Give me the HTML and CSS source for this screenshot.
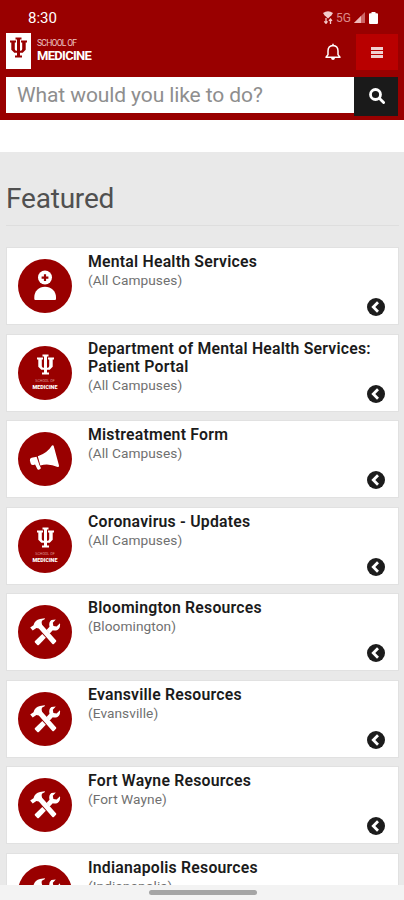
FILE: index.html
```html
<!DOCTYPE html>
<html lang="en">

<head>
    <meta charset="UTF-8">
    <meta name="viewport" content="width=device-width, initial-scale=1.0">
    <title>School of Medicine</title>
    <link rel="stylesheet" href="styles.css">
</head>

<body>
    <svg class="sprite">
        <symbol id="trident" viewBox="0 0 17 20">
            <path d="M5.500 0h6v2H10v11.200h.6q1.600 0 1.600-1.700V5H11V3h6v2h-1.300v7.200l-3 3.100H10V18h2v2H5v-2h2v-2.700H4.300l-3-3.100V5H0V3h6v2H4.800v6.500q0 1.700 1.600 1.700H7V2H5.500z"/>
        </symbol>
        <symbol id="person" viewBox="0 0 54 54">
            <circle cx="27" cy="18.500" r="7"/>
            <path d="M16.300 40v-2c0-6 4.500-10.300 10.700-10.300S38 32 38 38v2q0 1-1 1H17.300q-1 0-1-1z"/>
            <path class="cut" d="M25.900 15.300h2.200v2.300h2.300v2.200h-2.300v2.300h-2.200v-2.300h-2.300v-2.200h2.300z"/>
        </symbol>
        <symbol id="megaphone" viewBox="0 0 54 54">
            <path d="M19.800 24.300Q29 21.500 34 13.600q1.200-1 1.700.5L41 33.500q.2 1.700-1.300 1.500Q31 31 22.300 33.400z"/>
            <path d="M18.600 24.700l-5 1.100q-2.200.7-1.700 2.700l.8 2.900q.7 1.800 2.700 1.500l1.700-.3 2.200 4.500q.5.900 1.500.6l1.500-.6q.8-.6.400-1.500l-1.300-2.500z"/>
        </symbol>
        <symbol id="tools" viewBox="0 0 54 54">
            <path d="M12.200 22.500l3.300-2.300Q17 14.700 22 13.900l4.600-.7q.8.500 0 1l-2.700 1.600q-.6 2 .2 3.900L38 35.200q.7.800 0 1.500l-2.100 2.200q-.8.700-1.500 0L20.800 23.500l-2.400-.4-3.700 2.500z"/>
            <path d="M17 36l7.300-7 3.500 3.700-7 7.200q-.8.600-1.500 0L17 37.500q-.7-.8 0-1.500z"/>
            <path d="M28.500 25l3-3.200q-1.100-4.400 1.900-6.700l4.400-.7-3 3.300.6 3.200 3.200.6 3.400-3.200q.8 4.800-2.500 6.600-2.400 1.200-4.700.4l-3.100 3.100z"/>
        </symbol>
        <symbol id="chevron" viewBox="0 0 18 18">
            <circle cx="9" cy="9" r="9"/>
            <path d="M11 4.300L6.300 9l4.700 4.700"/>
        </symbol>
    </svg>

    <header class="header">
        <div class="status-bar">
            <span class="time">8:30</span>
            <svg class="wifi" viewBox="0 0 10 13">
                <path d="M0 2Q5-1.500 10 2L8.500 4.200 5 7.500 1.500 4.200z"/>
                <path d="M3 7v5M1.300 10.300L3 12.300l1.500-2M7.500 13V8M6 9.800L7.500 8 9 9.800"/>
            </svg>
            <span class="network">5G</span>
            <svg class="signal" viewBox="0 0 11 11">
                <path class="dim" d="M11 0v11H0z"/>
                <path d="M7 4v7H0z"/>
            </svg>
            <svg class="battery" viewBox="0 0 9 12">
                <path d="M2.500 0h4v1.300H8q1 0 1 1V11q0 1-1 1H1q-1 0-1-1V2.300q0-1 1-1h1.500z"/>
            </svg>
        </div>
        <div class="brand-bar">
            <div class="logo"><svg><use href="#trident"/></svg></div>
            <div class="brand">
                <span>SCHOOL OF</span>
                <strong>MEDICINE</strong>
            </div>
            <svg class="bell" viewBox="0 0 16 18">
                <path d="M8 .8v1.500M1 14.200h14l-2-2.600V8q0-5.300-5-5.600Q3 2.700 3 8v3.600z"/>
                <path class="fill" d="M6 15h4q-.3 2-2 2t-2-2z"/>
            </svg>
            <div class="menu"><i></i><i></i><i></i></div>
        </div>
        <div class="search">
            <div class="search-input">What would you like to do?</div>
            <div class="search-button">
                <svg viewBox="0 0 16 16"><circle cx="6.500" cy="6.500" r="5"/><path d="M10.300 10.300l4.300 4.300"/></svg>
            </div>
        </div>
    </header>

    <main class="content">
        <h1>Featured</h1>
        <div class="card">
            <svg class="icon"><use href="#person"/></svg>
            <div class="text"><h2>Mental Health Services</h2><p>(All Campuses)</p></div>
            <svg class="arrow"><use href="#chevron"/></svg>
        </div>
        <div class="card">
            <div class="icon school"><svg><use href="#trident"/></svg><span>SCHOOL OF</span><strong>MEDICINE</strong></div>
            <div class="text"><h2>Department of Mental Health Services:<br>Patient Portal</h2><p>(All Campuses)</p></div>
            <svg class="arrow"><use href="#chevron"/></svg>
        </div>
        <div class="card">
            <svg class="icon"><use href="#megaphone"/></svg>
            <div class="text"><h2>Mistreatment Form</h2><p>(All Campuses)</p></div>
            <svg class="arrow"><use href="#chevron"/></svg>
        </div>
        <div class="card">
            <div class="icon school"><svg><use href="#trident"/></svg><span>SCHOOL OF</span><strong>MEDICINE</strong></div>
            <div class="text"><h2>Coronavirus - Updates</h2><p>(All Campuses)</p></div>
            <svg class="arrow"><use href="#chevron"/></svg>
        </div>
        <div class="card">
            <svg class="icon"><use href="#tools"/></svg>
            <div class="text"><h2>Bloomington Resources</h2><p>(Bloomington)</p></div>
            <svg class="arrow"><use href="#chevron"/></svg>
        </div>
        <div class="card">
            <svg class="icon"><use href="#tools"/></svg>
            <div class="text"><h2>Evansville Resources</h2><p>(Evansville)</p></div>
            <svg class="arrow"><use href="#chevron"/></svg>
        </div>
        <div class="card">
            <svg class="icon"><use href="#tools"/></svg>
            <div class="text"><h2>Fort Wayne Resources</h2><p>(Fort Wayne)</p></div>
            <svg class="arrow"><use href="#chevron"/></svg>
        </div>
        <div class="card">
            <svg class="icon"><use href="#tools"/></svg>
            <div class="text"><h2>Indianapolis Resources</h2><p>(Indianapolis)</p></div>
            <svg class="arrow"><use href="#chevron"/></svg>
        </div>
    </main>

    <footer class="nav-bar"><div class="handle"></div></footer>
</body>

</html>
```
FILE: styles.css
```css
* {
    box-sizing: border-box;
}

body {
    margin: 0;
    height: 900px;
    display: flex;
    flex-direction: column;
    overflow: hidden;
    font-family: Roboto, sans-serif;
    background: #fff;
}

svg {
    display: block;
}

.sprite {
    position: absolute;
    width: 0;
    height: 0;
}

.header {
    flex: none;
    height: 120px;
    padding: 0 6px;
    background: #990000;
}

.status-bar {
    height: 33px;
    padding: 2px 20px 0 22px;
    display: flex;
    align-items: center;
    color: #fff;
}

.time {
    margin-right: auto;
    font-size: 15px;
}

.wifi {
    width: 10px;
    height: 13px;
    fill: #f3cccc;
}

.wifi path + path {
    fill: none;
    stroke: #f3cccc;
    stroke-width: 1.3;
}

.network {
    margin: 0 3px 0 3px;
    font-size: 12px;
    color: #dc8c8c;
}

.signal {
    width: 11px;
    height: 11px;
    margin-right: 4px;
    fill: #eebbbb;
}

.signal .dim {
    fill: #c66;
}

.battery {
    width: 9px;
    height: 12px;
    fill: #fff;
}

.brand-bar {
    height: 44px;
    display: flex;
    align-items: flex-start;
}

.logo {
    width: 25px;
    height: 36px;
    padding: 4px 4px;
    background: #fff;
}

.logo svg {
    width: 17px;
    height: 21px;
    fill: #990000;
}

.brand {
    display: flex;
    flex-direction: column;
    margin: 5px auto 0 6px;
    color: #fff;
}

.brand span {
    font-size: 8.5px;
    line-height: 10px;
    letter-spacing: -0.7px;
    color: #ecc4c4;
}

.brand strong {
    font-size: 13px;
    line-height: 16px;
    letter-spacing: -0.7px;
}

.bell {
    width: 16px;
    height: 18px;
    margin: 10px 15px 0 0;
    fill: none;
    stroke: #fff;
    stroke-width: 1.5;
    stroke-linejoin: round;
}

.bell .fill {
    fill: #fff;
    stroke: none;
}

.menu {
    width: 42px;
    height: 36px;
    margin-top: 1px;
    display: flex;
    flex-direction: column;
    align-items: center;
    justify-content: center;
    gap: 1px;
    background: #b90000;
}

.menu i {
    width: 12px;
    height: 3px;
    background: #f0d0d0;
}

.search {
    display: flex;
    align-items: flex-start;
}

.search-input {
    width: 348px;
    height: 36px;
    padding-left: 11px;
    font-size: 21px;
    line-height: 37px;
    letter-spacing: -0.1px;
    color: #8e8e8e;
    background: #fff;
}

.search-button {
    width: 44px;
    height: 39px;
    padding: 11px 0 0 15px;
    background: #1a1a1a;
}

.search-button svg {
    width: 16px;
    height: 16px;
    fill: none;
    stroke: #fff;
    stroke-width: 2.8;
    stroke-linecap: round;
}

.content {
    flex: 1;
    min-height: 0;
    margin-top: 32px;
    padding: 29px 5px 0 6px;
    overflow: hidden;
    background: #e9e9e9;
}

h1 {
    height: 45px;
    margin: 0 0 21px;
    border-bottom: 1px solid #dedede;
    font-size: 28px;
    font-weight: 400;
    line-height: 35px;
    letter-spacing: -0.2px;
    color: #505050;
}

.card {
    height: 78px;
    margin-bottom: 8.5px;
    padding: 0 13px 0 11px;
    display: flex;
    background: #fff;
    border: 1px solid #e1e1e1;
}

.icon {
    flex: none;
    width: 54px;
    height: 54px;
    margin-top: 11px;
    border-radius: 50%;
    background: #990000;
    fill: #fff;
}

.cut {
    fill: #990000;
}

.school {
    padding-top: 8px;
    display: flex;
    flex-direction: column;
    align-items: center;
    color: #fff;
}

.school svg {
    width: 17px;
    height: 21px;
}

.school span {
    margin-top: 4px;
    font-size: 3.6px;
    line-height: 5px;
    color: #dc9a9a;
}

.school strong {
    font-size: 5.4px;
    line-height: 7px;
    font-weight: 900;
}

.text {
    flex: 1;
    min-width: 0;
    margin: 5px 0 0 16px;
    white-space: nowrap;
}

h2 {
    margin: 0;
    font-size: 15.8px;
    font-weight: 600;
    line-height: 18px;
    letter-spacing: 0.22px;
    color: #1b1b1b;
}

p {
    margin: 0;
    font-size: 13.7px;
    line-height: 19px;
    letter-spacing: 0.06px;
    color: #707070;
}

.arrow {
    flex: none;
    width: 18px;
    height: 18px;
    margin-top: 50px;
    fill: #1c1c1c;
}

#chevron path {
    fill: none;
    stroke: #fff;
    stroke-width: 2.8;
}

.nav-bar {
    flex: none;
    height: 15px;
    padding-top: 5px;
    background: #f3f3f3;
}

.handle {
    width: 108px;
    height: 5px;
    margin-left: 149px;
    border-radius: 3px;
    background: #a5a5a5;
}
```
